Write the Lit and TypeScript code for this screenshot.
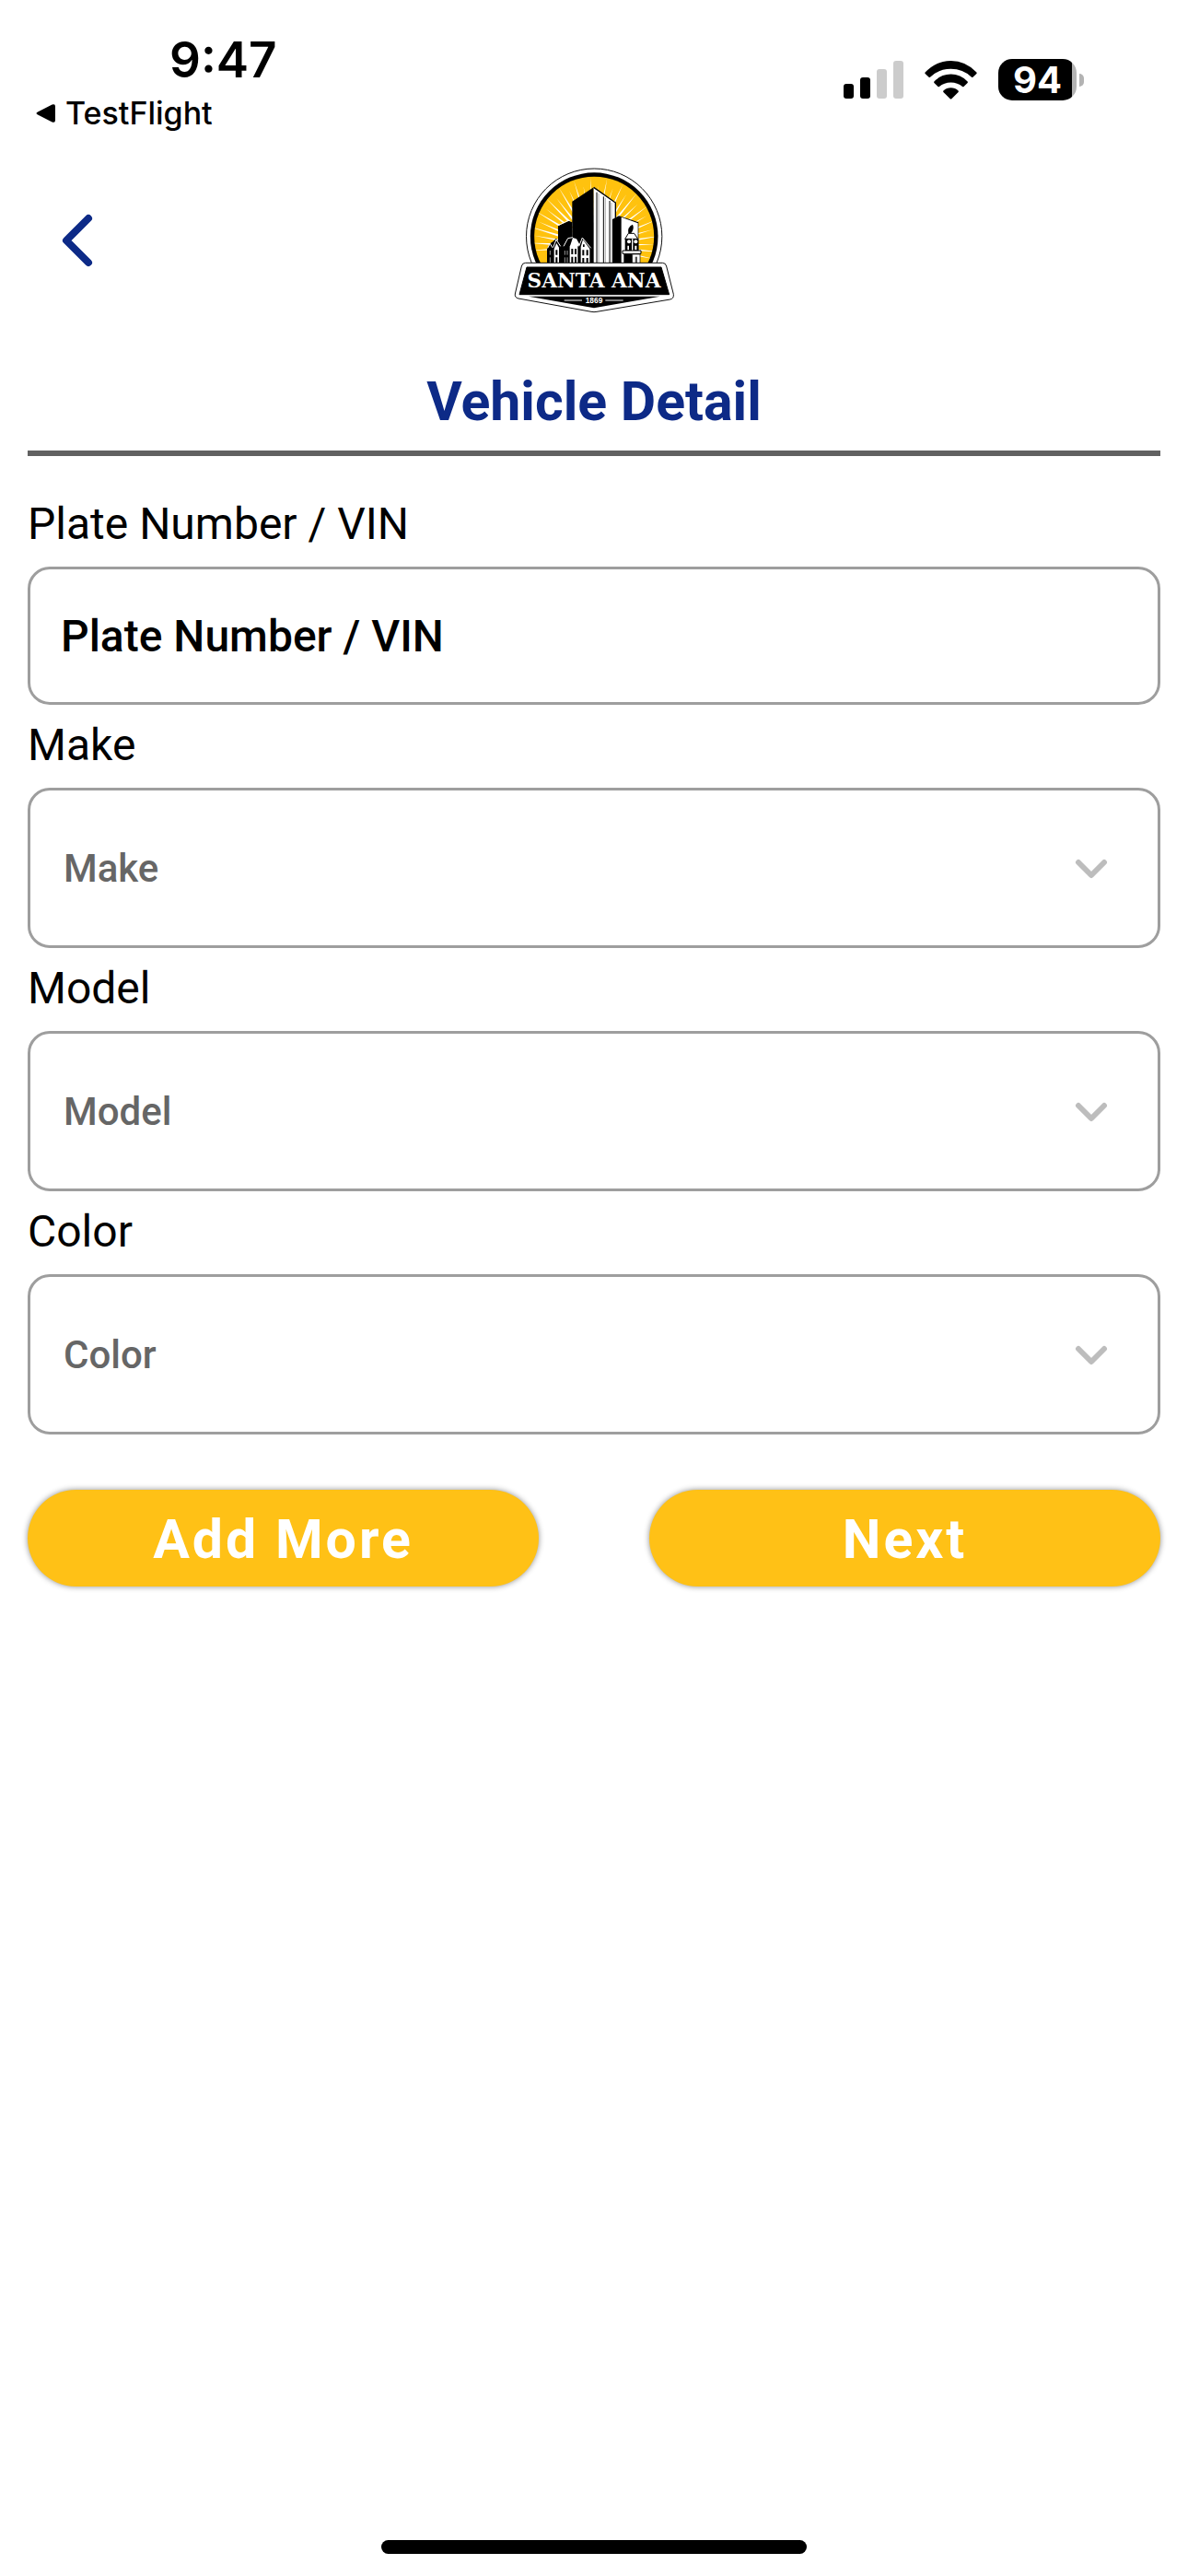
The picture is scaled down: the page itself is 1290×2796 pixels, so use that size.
import { LitElement, html, svg, css } from "lit";
import { customElement, property } from "lit/decorators.js";

const point = (cx: number, cy: number, r: number, deg: number) => {
  const a = (deg * Math.PI) / 180;
  return `${(cx + r * Math.cos(a)).toFixed(1)},${(cy + r * Math.sin(a)).toFixed(1)}`;
};

/** City emblem: sunburst, skyline and name plate. */
@customElement("city-logo")
export class CityLogo extends LitElement {
  static styles = css`
    :host {
      display: block;
    }
    .emblem {
      display: block;
      width: 190px;
      height: 175px;
    }
    .name {
      font: 700 65px "DejaVu Serif", serif;
      fill: #fff;
    }
    .year {
      font: 700 25px "Liberation Sans", sans-serif;
      fill: #fff;
    }
  `;

  private rays() {
    const out = [];
    for (let i = 0; i <= 28; i++) {
      const deg = 176 + i * 7;
      const reach = i % 2 ? 224 : 198;
      out.push(
        svg`<polygon fill="#fff" points="${point(285, 292, 60, deg - 5)} ${point(285, 292, reach, deg)} ${point(285, 292, 60, deg + 5)}"></polygon>`
      );
    }
    return out;
  }

  render() {
    return html`
      <svg class="emblem" viewBox="0 0 570 525" role="img" aria-label="City of Santa Ana">
        <defs>
          <clipPath id="sun"><circle cx="285.5" cy="260" r="195"></circle></clipPath>
        </defs>
        <circle cx="285.5" cy="260" r="221" fill="#fff" stroke="#111" stroke-width="3"></circle>
        <circle cx="285.5" cy="260" r="208" fill="#000"></circle>
        <circle cx="285.5" cy="260" r="195" fill="#ffc20e"></circle>
        <g clip-path="url(#sun)">${this.rays()}</g>

        <polygon points="168,226 203,209 214,214 214,300 168,300" fill="#000"></polygon>
        <path d="M170 223L204 207" stroke="#fff" stroke-width="3"></path>

        <polygon points="214,146 284,100 286,350 214,350" fill="#000"></polygon>
        <polygon points="284,100 355,150 355,350 284,350" fill="#fff"></polygon>
        <path d="M284 100L355 150V200" fill="none" stroke="#000" stroke-width="4"></path>
        <path d="M294 116V348M316 130V348M336 144V348" stroke="#000" stroke-width="3"></path>
        <path d="M300 120V348M322 135V348M342 150V348" stroke="#888" stroke-width="2"></path>

        <polygon points="345,204 366,193 430,214 430,350 345,350" fill="#000"></polygon>
        <polygon points="374,197 428,217 428,350 374,350" fill="#fff"></polygon>
        <path d="M397 250Q393 229 411 221Q417 234 407 248Z" fill="#000"></path>
        <path d="M386 268L397 250H416L428 268Z" fill="#fff" stroke="#000" stroke-width="3"></path>
        <path d="M386 268H430V306H386Z" fill="#000"></path>
        <circle cx="399" cy="277" r="6" fill="#fff"></circle>
        <circle cx="421" cy="277" r="6" fill="#fff"></circle>
        <path d="M408 268H412V306H408ZM394 290H399V304H394ZM418 290H424V304H418Z" fill="#fff"></path>
        <path d="M378 306H438V316H378Z" fill="#fff" stroke="#000" stroke-width="3"></path>
        <path d="M382 318H410V350H382Z" fill="#000"></path>
        <path d="M410 318H435V350H410Z" fill="#fff" stroke="#000" stroke-width="2"></path>
        <path d="M419 326H426V348H419Z" fill="#555"></path>

        <path d="M132 300L142 283L152 276L162 266L174 284L186 272L200 264L216 260L232 268L247 260L262 282L276 300V350H132Z" fill="#000"></path>
        <path d="M155 300L163 282L171 296V346H155ZM208 288L216 264L228 268L238 286L234 292H232V346H206V292ZM242 294L249 270L271 300V346H242Z" fill="#fff"></path>
        <path d="M134 298L142 283L149 296M152 296L162 270L176 292M186 292L200 266L216 263M236 292L247 264L275 298" fill="none" stroke="#fff" stroke-width="3"></path>
        <path d="M160 304H166V320H160ZM160 328H166V346H160ZM211 300H217V318H211ZM222 300H228V318H222ZM211 326H217V346H211ZM222 326H228V346H222ZM247 304H253V322H247ZM260 304H266V322H260ZM247 330H253V348H247ZM260 330H266V348H260ZM249 286H254V294H249Z" fill="#000"></path>
        <path d="M190 306V320M198 306V320M190 328V346M198 328V346M142 306V320M142 328V346" stroke="#999" stroke-width="3"></path>

        <path d="M62 346H508Q519 346 521 357L544 448Q546 462 533 465L294 505Q285 507 276 505L39 462Q26 459 28 447L49 357Q51 346 62 346Z" fill="#fff" stroke="#111" stroke-width="3"></path>
        <path d="M66 360H504L530 449H42Z" fill="#000" stroke="#000" stroke-width="3" stroke-linejoin="round"></path>
        <path d="M72 455H500L285 493Z" fill="#000"></path>
        <path d="M188 468H246M322 468H380" stroke="#fff" stroke-width="3"></path>
        <text class="name" x="285" y="426" text-anchor="middle">SANTA ANA</text>
        <text class="year" x="285" y="477" text-anchor="middle">1869</text>
      </svg>
    `;
  }
}

/** Phone status bar with time, return link and indicators. */
@customElement("status-bar")
export class StatusBar extends LitElement {
  static styles = css`
    :host {
      display: flex;
      justify-content: space-between;
      align-items: flex-start;
      min-height: 170px;
      box-sizing: border-box;
      padding: 33px 113px 0 39px;
      font-family: Inter, "Liberation Sans", sans-serif;
      color: #000;
    }
    .left {
      display: flex;
      flex-direction: column;
      align-items: flex-start;
      gap: 6px;
    }
    .time {
      margin-left: 145px;
      font-size: 53px;
      line-height: 64px;
      font-weight: 600;
    }
    .return {
      display: flex;
      align-items: center;
      gap: 10px;
      font-size: 34px;
      line-height: 40px;
      font-weight: 500;
      color: inherit;
      text-decoration: none;
    }
    .return svg {
      width: 22px;
      height: 22px;
    }
    .right {
      display: flex;
      align-items: center;
      gap: 23px;
      padding-top: 31px;
    }
    .right svg {
      display: block;
    }
    .power {
      display: flex;
      align-items: center;
      gap: 3px;
    }
    .battery {
      width: 85px;
      height: 45px;
      box-sizing: border-box;
      border-radius: 15px;
      background: linear-gradient(to right, #000 80px, #b3b3b3 80px);
      color: #fff;
      font-size: 40px;
      line-height: 45px;
      font-weight: 700;
      text-align: center;
    }
    .nub {
      width: 5px;
      height: 14px;
      border-radius: 0 7px 7px 0;
      background: #b3b3b3;
    }
  `;

  render() {
    return html`
      <div class="left">
        <span class="time">9:47</span>
        <a class="return" href="#testflight">
          <svg viewBox="0 0 22 22" aria-hidden="true">
            <path d="M2 9.6L17.6 1.6Q21 0.2 21 3.6V18.4Q21 21.8 17.6 20.4L2 12.6Q-1 11.1 2 9.6Z"></path>
          </svg>
          TestFlight
        </a>
      </div>
      <div class="right">
        <svg width="65" height="41" viewBox="0 0 65 41" aria-label="Signal" role="img">
          <rect x="0" y="25" width="11" height="16" rx="3"></rect>
          <rect x="18" y="18" width="11" height="23" rx="3"></rect>
          <rect x="36" y="9" width="11" height="32" rx="3" fill="#ccc"></rect>
          <rect x="54" y="0" width="11" height="41" rx="3" fill="#ccc"></rect>
        </svg>
        <svg width="57" height="42" viewBox="0 0 57 42" aria-label="Wi-Fi" role="img">
          <path d="M0.6 12.5Q12.5 0 28.5 0T56.4 12.5Q57 13.3 56.4 14L52.4 17.7Q51.7 18.3 51 17.7Q41.5 8.8 28.5 8.8T6 17.7Q5.3 18.3 4.6 17.7L0.6 14Q0 13.3 0.6 12.5Z"></path>
          <path d="M10.4 22.5Q18 14.6 28.5 14.6T46.6 22.5Q47.2 23.2 46.6 23.9L42.5 27.9Q41.8 28.5 41.1 27.9Q35.8 23.4 28.5 23.4T15.9 27.9Q15.2 28.5 14.5 27.9L10.4 23.9Q9.8 23.2 10.4 22.5Z"></path>
          <path d="M20.4 32.4Q23.8 29.2 28.5 29.2T36.6 32.4Q37.2 33.2 36.6 33.9L29.3 41.2Q28.5 41.9 27.7 41.2L20.4 33.9Q19.8 33.2 20.4 32.4Z"></path>
        </svg>
        <div class="power">
          <div class="battery">94</div>
          <div class="nub"></div>
        </div>
      </div>
    `;
  }
}

/** Labelled drop-down with a chevron. */
@customElement("select-field")
export class SelectField extends LitElement {
  @property() label = "";

  static styles = css`
    :host {
      display: block;
      font-family: Roboto, "Liberation Sans", sans-serif;
    }
    .label {
      display: block;
      padding: 16px 0 18px;
      font-size: 48px;
      line-height: 56px;
      color: #000;
    }
    .box {
      display: grid;
      align-items: center;
    }
    .control,
    .chevron {
      grid-area: 1 / 1;
    }
    .control {
      appearance: none;
      width: 100%;
      height: 174px;
      box-sizing: border-box;
      margin: 0;
      padding: 0 120px 0 36px;
      border: 3px solid #9e9e9e;
      border-radius: 24px;
      background: #fff;
      color: #666;
      font-family: inherit;
      font-size: 42px;
      font-weight: 500;
    }
    .chevron {
      justify-self: end;
      width: 36px;
      height: 24px;
      margin-right: 57px;
      pointer-events: none;
    }
  `;

  render() {
    return html`
      <label class="label" for="choice">${this.label}</label>
      <div class="box">
        <select class="control" id="choice">
          <option>${this.label}</option>
        </select>
        <svg class="chevron" viewBox="0 0 36 24" aria-hidden="true">
          <path d="M4 6L18 20L32 6" fill="none" stroke="#bdbdbd" stroke-width="6" stroke-linecap="round" stroke-linejoin="round"></path>
        </svg>
      </div>
    `;
  }
}

@customElement("app-root")
export class AppRoot extends LitElement {
  static styles = css`
    :host {
      display: flex;
      flex-direction: column;
      min-height: 100vh;
      background: #fff;
      font-family: Roboto, "Liberation Sans", sans-serif;
    }
    .header {
      display: grid;
      grid-template-columns: 1fr auto 1fr;
      align-items: center;
      padding: 0 30px;
    }
    .back {
      justify-self: start;
      padding: 18px;
      border: 0;
      background: none;
    }
    .back svg {
      display: block;
      width: 72px;
      height: 72px;
    }
    .content {
      flex: 1;
      padding: 56px 30px 0;
    }
    .title {
      margin: 0 0 24px;
      padding-bottom: 18px;
      border-bottom: 6px solid #616161;
      color: #0d2a87;
      font-size: 59px;
      line-height: 70px;
      font-weight: 700;
      text-align: center;
    }
    .label {
      display: block;
      padding: 22px 0 18px;
      font-size: 48px;
      line-height: 56px;
      color: #000;
    }
    .input {
      display: block;
      width: 100%;
      height: 150px;
      box-sizing: border-box;
      margin: 0;
      padding: 0 33px;
      border: 3px solid #9e9e9e;
      border-radius: 24px;
      background: #fff;
      color: #000;
      font-family: inherit;
      font-size: 48px;
      font-weight: 500;
    }
    .input::placeholder {
      color: #000;
      opacity: 1;
    }
    .actions {
      display: grid;
      grid-template-columns: 1fr 1fr;
      gap: 120px;
      margin-top: 60px;
    }
    .action {
      height: 105px;
      padding: 2px 0 0;
      border: 0;
      border-radius: 53px;
      background: #ffc116;
      box-shadow: 0 0 6px rgba(0, 0, 0, 0.45);
      color: #fff;
      font-family: inherit;
      font-size: 59px;
      line-height: 70px;
      font-weight: 700;
      letter-spacing: 3px;
    }
    .home {
      align-self: center;
      width: 462px;
      height: 15px;
      margin: 24px 0;
      border-radius: 8px;
      background: #000;
    }
  `;

  render() {
    return html`
      <status-bar></status-bar>
      <header class="header">
        <button class="back" aria-label="Back">
          <svg viewBox="0 0 72 72" aria-hidden="true">
            <path d="M48 15L24 39L48 63" fill="none" stroke="#0d2a87" stroke-width="8" stroke-linecap="round" stroke-linejoin="round"></path>
          </svg>
        </button>
        <city-logo></city-logo>
      </header>
      <main class="content">
        <h1 class="title">Vehicle Detail</h1>
        <label class="label" for="plate">Plate Number / VIN</label>
        <input class="input" id="plate" type="text" placeholder="Plate Number / VIN" />
        <select-field label="Make"></select-field>
        <select-field label="Model"></select-field>
        <select-field label="Color"></select-field>
        <div class="actions">
          <button class="action">Add More</button>
          <button class="action">Next</button>
        </div>
      </main>
      <div class="home"></div>
    `;
  }
}
